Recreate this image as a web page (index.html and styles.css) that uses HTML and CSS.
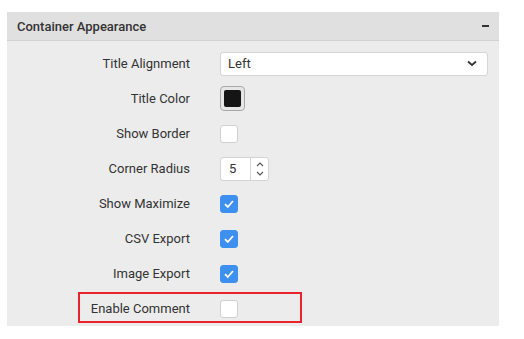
FILE: index.html
```html
<!DOCTYPE html>
<html lang="en">
<head>
  <meta charset="UTF-8">
  <title>Container Appearance</title>
  <link rel="stylesheet" href="styles.css">
</head>
<body>
  <div class="panel">
    <div class="panel-header">
      <span class="panel-title">Container Appearance</span>
      <span class="collapse"></span>
    </div>

    <div class="panel-body">
      <div class="row">
        <label>Title Alignment</label>
        <div class="select">
          <span>Left</span>
          <svg width="10" height="7" viewBox="0 0 10 7"><path d="M1 1.5 L5 5 L9 1.5" fill="none" stroke="#333" stroke-width="1.8"/></svg>
        </div>
      </div>

      <div class="row">
        <label>Title Color</label>
        <div class="swatch"><span></span></div>
      </div>

      <div class="row">
        <label>Show Border</label>
        <span class="check"></span>
      </div>

      <div class="row">
        <label>Corner Radius</label>
        <div class="number">
          <span class="value">5</span>
          <span class="spin">
            <svg width="8" height="5" viewBox="0 0 8 5"><path d="M1 4 L4 1 L7 4" fill="none" stroke="#555" stroke-width="1.1"/></svg>
            <svg width="8" height="5" viewBox="0 0 8 5"><path d="M1 1 L4 4 L7 1" fill="none" stroke="#555" stroke-width="1.1"/></svg>
          </span>
        </div>
      </div>

      <div class="row">
        <label>Show Maximize</label>
        <span class="check checked"><svg width="12" height="10" viewBox="0 0 12 10"><path d="M2 5.2 L4.8 8 L10 2" fill="none" stroke="#fff" stroke-width="1.8"/></svg></span>
      </div>

      <div class="row">
        <label>CSV Export</label>
        <span class="check checked"><svg width="12" height="10" viewBox="0 0 12 10"><path d="M2 5.2 L4.8 8 L10 2" fill="none" stroke="#fff" stroke-width="1.8"/></svg></span>
      </div>

      <div class="row">
        <label>Image Export</label>
        <span class="check checked"><svg width="12" height="10" viewBox="0 0 12 10"><path d="M2 5.2 L4.8 8 L10 2" fill="none" stroke="#fff" stroke-width="1.8"/></svg></span>
      </div>

      <div class="row highlighted">
        <label>Enable Comment</label>
        <span class="check"></span>
      </div>
    </div>
  </div>
</body>
</html>
```

FILE: styles.css
```css
body {
  margin: 0;
  background: #fff;
  font-family: Roboto, "Liberation Sans", sans-serif;
  font-size: 13px;
  color: #333;
}

.panel {
  margin: 12px 0 0 7px;
  width: 492px;
  background: #ececec;
}

.panel-header {
  display: flex;
  align-items: center;
  justify-content: space-between;
  height: 28px;
  padding: 0 10px 0 10px;
  background: #e0e0e0;
  border-bottom: 1px solid #d2d2d2;
}

.panel-title {
  font-weight: 500;
  color: #333;
}

.collapse {
  width: 7px;
  height: 2px;
  background: #333;
  margin-right: 0;
}

.panel-body {
  padding-top: 5px;
}

.row {
  display: grid;
  grid-template-columns: 183px 1fr;
  column-gap: 30px;
  align-items: center;
  height: 35px;
  padding-right: 11px;
  position: relative;
}

.row label {
  text-align: right;
  color: #333;
}

.select {
  display: flex;
  align-items: center;
  justify-content: space-between;
  height: 22px;
  padding: 0 10px 0 7px;
  background: #fff;
  border: 1px solid #d4d4d4;
  border-radius: 3px;
}

.swatch {
  width: 23px;
  height: 23px;
  border: 1px solid #a8a8a8;
  border-radius: 4px;
  background: #e6e6e6;
  display: flex;
  align-items: center;
  justify-content: center;
}

.swatch span {
  width: 17px;
  height: 17px;
  border-radius: 2px;
  background: #151515;
}

.check {
  width: 16px;
  height: 16px;
  border: 1px solid #d0d0d0;
  border-radius: 3px;
  background: #fff;
  display: flex;
  align-items: center;
  justify-content: center;
}

.check.checked {
  background: #3d8ff0;
  border-color: #3d8ff0;
}

.number {
  display: flex;
  width: 47px;
  height: 22px;
  background: #fff;
  border: 1px solid #d4d4d4;
  border-radius: 3px;
}

.number .value {
  width: 30px;
  padding-left: 8px;
  line-height: 22px;
  box-sizing: border-box;
  border-right: 1px solid #d4d4d4;
}

.number .spin {
  flex: 1;
  display: flex;
  flex-direction: column;
  align-items: center;
  justify-content: center;
  gap: 4px;
}

.highlighted::after {
  content: "";
  position: absolute;
  left: 71px;
  top: 1px;
  width: 220px;
  height: 27px;
  border: 2px solid #e8232b;
}
```
